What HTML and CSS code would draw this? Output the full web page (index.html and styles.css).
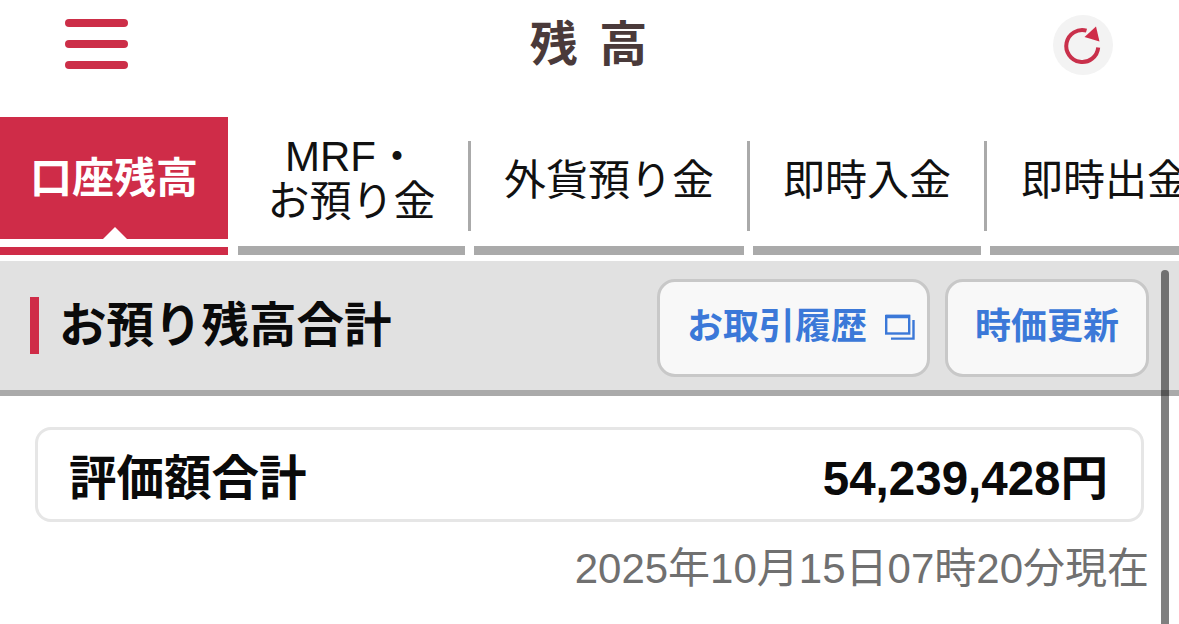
FILE: index.html
```html
<!DOCTYPE html>
<html lang="ja">

<head>
  <meta charset="UTF-8">
  <meta name="viewport" content="width=device-width, initial-scale=1.0">
  <title>残高</title>
  <link rel="stylesheet" href="styles.css">
</head>

<body>
  <div class="page">
    <header class="top-bar">
      <button class="menu-button" aria-label="メニュー">
        <span></span>
        <span></span>
        <span></span>
      </button>
      <h1 class="page-title">残 高</h1>
      <button class="refresh-button" aria-label="更新">
        <svg viewBox="0 0 60 60" width="60" height="60">
          <path d="M45.2 32.5A16 16 0 1 1 33.5 15.6" fill="none" stroke="#c9304b" stroke-width="4" />
          <path d="M43 11.5L46.5 26.5L31.5 22Z" fill="#cf2c48" />
        </svg>
      </button>
    </header>

    <nav class="tabs">
      <a class="tab active"><span class="tab-label">口座残高</span></a>
      <a class="tab divider tab-mrf"><span class="tab-label">MRF・<br>お預り金</span></a>
      <a class="tab divider tab-wide"><span class="tab-label">外貨預り金</span></a>
      <a class="tab divider"><span class="tab-label">即時入金</span></a>
      <a class="tab tab-last"><span class="tab-label">即時出金</span></a>
    </nav>

    <section class="summary-head">
      <span class="accent"></span>
      <h2>お預り残高合計</h2>
      <div class="head-buttons">
        <button class="head-button history-button">
          お取引履歴
          <svg viewBox="0 0 30 26" width="30" height="26">
            <rect x="1.2" y="2" width="23" height="17.5" fill="none" stroke="#3b78d8" stroke-width="2.4" />
            <path d="M1 2.5H25" stroke="#3b78d8" stroke-width="3.5" />
            <path d="M28.5 6V24.6H6" fill="none" stroke="#3b78d8" stroke-width="2.4" />
          </svg>
        </button>
        <button class="head-button price-button">時価更新</button>
      </div>
    </section>

    <div class="total-card">
      <span class="total-label">評価額合計</span>
      <span class="total-value">54,239,428円</span>
    </div>
    <p class="as-of">2025年10月15日07時20分現在</p>

    <div class="scrollbar"></div>
  </div>
</body>

</html>
```

FILE: styles.css
```css
* {
  box-sizing: border-box;
}

html,
body {
  margin: 0;
  padding: 0;
  height: 100%;
  background-color: #fff;
  overflow: hidden;
}

body {
  font-family: "Liberation Sans", "Noto Sans CJK JP", sans-serif;
}

button {
  font-family: inherit;
  padding: 0;
  border: none;
  background: none;
}

.page {
  position: relative;
  height: 624px;
  overflow: hidden;
}

.top-bar {
  display: flex;
  justify-content: space-between;
  align-items: flex-start;
  height: 117px;
  padding: 15px 66px 0 65px;
}

.menu-button {
  display: flex;
  flex-direction: column;
  gap: 13px;
  width: 63px;
  margin-top: 4px;
}

.menu-button span {
  display: block;
  height: 8px;
  border-radius: 4px;
  background-color: #cc2e48;
}

.page-title {
  margin: 0 4px 0 0;
  font-size: 48px;
  line-height: 60px;
  font-weight: bold;
  color: #4a3a3a;
  word-spacing: 8px;
}

.refresh-button {
  width: 60px;
  height: 60px;
  border-radius: 50%;
  background-color: #f3f3f3;
}

.refresh-button svg {
  display: block;
}

.tabs {
  display: flex;
  gap: 9px;
  height: 138px;
  overflow: hidden;
}

.tab {
  position: relative;
  display: flex;
  flex: 0 0 228px;
  border-bottom: 9px solid #aaa;
  color: #111;
}

.tab-mrf {
  flex-basis: 227px;
  margin-left: 1px;
}

.tab-wide {
  flex-basis: 270px;
}

.tab-last {
  flex-basis: 240px;
}

.tab-label {
  flex: 1;
  display: flex;
  align-items: center;
  justify-content: center;
  padding-bottom: 2px;
  font-size: 42px;
  line-height: 45px;
  text-align: center;
  white-space: nowrap;
}

.tab-mrf .tab-label {
  display: block;
  padding-top: 17px;
}

.tab-last .tab-label {
  justify-content: flex-start;
  padding-left: 31px;
}

.divider::after {
  content: "";
  position: absolute;
  top: 24px;
  right: -6px;
  width: 3px;
  height: 90px;
  background-color: #aaa;
}

.active {
  border-bottom: 8px solid #cf2c48;
  background-color: #fff;
  color: #fff;
}

.active .tab-label {
  margin-bottom: 8px;
  padding-bottom: 0;
  background-color: #cf2c48;
  font-weight: bold;
}

.active::after {
  content: "";
  position: absolute;
  left: 103px;
  bottom: 8px;
  border-left: 12px solid transparent;
  border-right: 12px solid transparent;
  border-bottom: 12px solid #fff;
}

.summary-head {
  display: flex;
  align-items: center;
  height: 135px;
  margin-top: 6px;
  padding: 0 30px;
  border-bottom: 6px solid #aaa;
  background-color: #e1e1e1;
}

.accent {
  width: 9px;
  height: 57px;
  background-color: #cf2c48;
}

.summary-head h2 {
  margin: 0 0 0 20px;
  font-size: 47.5px;
  line-height: 60px;
  font-weight: bold;
  color: #0a0a0a;
}

.head-buttons {
  display: flex;
  gap: 15px;
  margin-left: auto;
  margin-top: 5px;
}

.head-button {
  display: flex;
  align-items: center;
  justify-content: center;
  height: 98px;
  padding-bottom: 11px;
  border: 3px solid #c8c8c8;
  border-radius: 18px;
  background-color: #f8f8f8;
  color: #3b78d8;
  font-size: 36px;
  font-weight: bold;
}

.history-button {
  justify-content: flex-start;
  width: 273px;
  gap: 18px;
  padding-left: 27px;
}

.history-button svg {
  margin-top: 9px;
}

.price-button {
  width: 204px;
}

.total-card {
  display: flex;
  align-items: center;
  justify-content: space-between;
  width: 1109px;
  height: 95px;
  margin: 31px 0 0 35px;
  padding: 0 33px 0 31px;
  border: 3px solid #e6e6e6;
  border-radius: 16px;
  font-weight: bold;
  color: #0a0a0a;
}

.total-label {
  font-size: 47.5px;
}

.total-value {
  font-size: 47.5px;
}

.as-of {
  margin: 20px 30px 0 0;
  font-size: 42px;
  line-height: 54px;
  text-align: right;
  color: #707070;
}

.scrollbar {
  position: absolute;
  top: 270px;
  right: 10px;
  bottom: 0;
  width: 8px;
  border-radius: 4px 4px 0 0;
  background-color: rgba(0, 0, 0, 0.5);
}
```
